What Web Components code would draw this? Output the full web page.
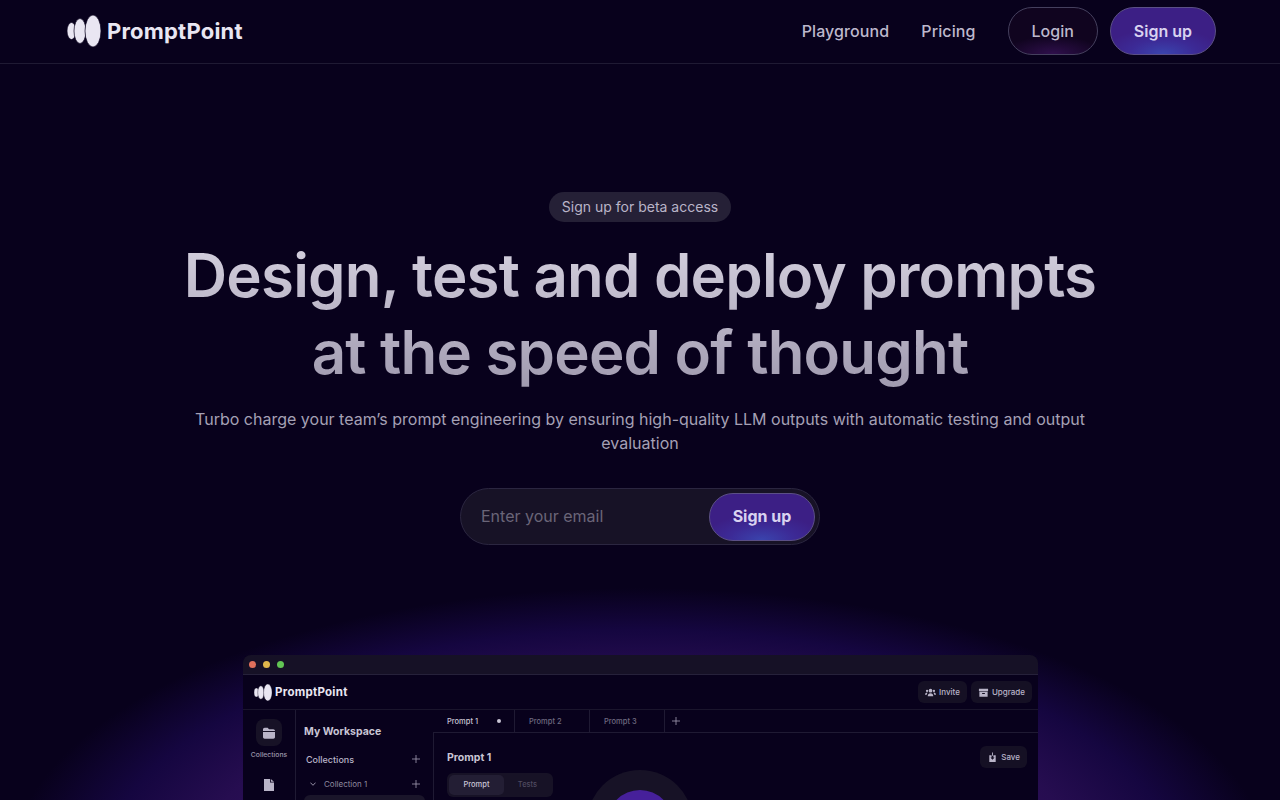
<!DOCTYPE html>
<html lang="en">
<head>
<meta charset="utf-8">
<title>PromptPoint</title>
<style>
    html, body { margin: 0; height: 100%; }
    body { background: #08011c; font-family: Inter, "Liberation Sans", sans-serif; overflow: hidden; }
</style>
</head>
<body>
<pp-page>
    <pp-nav slot="nav"></pp-nav>
    <pp-hero slot="hero"></pp-hero>
    <pp-window slot="window"></pp-window>
</pp-page>

<script>
const LOGO = (h, c) => `
    <svg width="${h * 34 / 32}" height="${h}" viewBox="0 0 34 32" fill="${c}" stroke="#08011c" stroke-width=".7">
        <ellipse cx="4.500" cy="16" rx="4.500" ry="8.500"/>
        <ellipse cx="13" cy="16" rx="6" ry="12.500"/>
        <ellipse cx="26" cy="16" rx="8" ry="16"/>
    </svg>`;

const PLUS = `<svg width="8" height="8" viewBox="0 0 8 8" stroke="#a5a0b5" stroke-width=".8"><path d="M4 0v8M0 4h8"/></svg>`;
const CHEVRON = `<svg width="6" height="4" viewBox="0 0 6 4" fill="none" stroke="#a5a0b5" stroke-width=".9"><path d="M.4.6 3 3.300 5.600.6"/></svg>`;

const ICONS = {
    folder: `<svg viewBox="0 0 24 24" fill="currentColor"><path d="M3 6.500C3 5.100 4.100 4 5.500 4H10l2 2.500h6.500C19.900 6.500 21 7.600 21 9H3z"/><path d="M3 10.500h18V18c0 1.400-1.100 2.500-2.500 2.500h-13C4.100 20.500 3 19.400 3 18z"/></svg>`,
    file: `<svg viewBox="0 0 10 12" fill="currentColor"><path d="M0 0h6v3.500h4V12H0z"/><path d="M6.800 0 10 2.800H6.800z"/></svg>`,
    users: `<svg viewBox="0 0 24 24" fill="currentColor"><circle cx="12" cy="8" r="4"/><circle cx="4.500" cy="8.500" r="2.500"/><circle cx="19.500" cy="8.500" r="2.500"/><path d="M6 20c0-4 2.500-6.500 6-6.500s6 2.500 6 6.500z"/><path d="M0 17c0-3 2-5 4.500-5l1 .5C4.500 14 4 15.500 4 17zM24 17c0-3-2-5-4.500-5l-1 .5c1 1.500 1.500 3 1.500 4.500z"/></svg>`,
    box: `<svg viewBox="0 0 24 24" fill="currentColor"><path d="M2 4h20v5H2z"/><path d="M3 10.500h18V21H3zM9 13v2h6v-2z" fill-rule="evenodd"/></svg>`,
    save: `<svg viewBox="0 0 24 24" fill="currentColor"><path d="M11 1h2v7h-2z"/><path d="M5 7h5v5H7.500l4.500 5 4.500-5H14V7h5v15H5z"/></svg>`
};

class PpPage extends HTMLElement {
    constructor() {
        super();
        this.attachShadow({mode: 'open'});
        this.shadowRoot.innerHTML = `
            <style>
                :host {
                    display: flex;
                    flex-direction: column;
                    position: relative;
                    width: 1280px;
                    height: 800px;
                    overflow: hidden;
                    background: #08011c;
                }
                #glow {
                    position: absolute;
                    left: 640px;
                    top: 588px;
                    width: 1260px;
                    height: 560px;
                    margin-left: -630px;
                    border-radius: 50%;
                    background: radial-gradient(closest-side, #3a1068 0%, #33105f 50%, #260d50 70%, #150640 85%, rgba(8,1,28,0) 100%);
                }
                .layer { position: relative; display: flex; flex-direction: column; }
            </style>
            <div id="glow"></div>
            <div class="layer">
                <slot name="nav"></slot>
                <slot name="hero"></slot>
                <slot name="window"></slot>
            </div>
        `;
    }
}

class PpButton extends HTMLElement {
    constructor() {
        super();
        this.attachShadow({mode: 'open'});
        this.shadowRoot.innerHTML = `
            <style>
                :host {
                    display: inline-flex;
                    align-items: center;
                    justify-content: center;
                    box-sizing: border-box;
                    height: 48px;
                    padding: 0 23px;
                    border-radius: 24px;
                    border: 1px solid #5b4f86;
                    color: #d9d2f0;
                    font: 600 16px/24px Inter, "Liberation Sans", sans-serif;
                    background: radial-gradient(60px 26px at 50% 100%, #3a44ad 0%, #3c2a96 55%, #3c1f85 100%);
                }
                :host([ghost]) {
                    font-weight: 500;
                    color: #bdb8cc;
                    border-color: #45405e;
                    background: radial-gradient(50px 18px at 50% 100%, #2f0f4c 0%, #10041f 100%);
                }
            </style>
            <slot></slot>
        `;
    }
}

class PpNav extends HTMLElement {
    constructor() {
        super();
        this.attachShadow({mode: 'open'});
        this.shadowRoot.innerHTML = `
            <style>
                :host {
                    display: flex;
                    align-items: center;
                    justify-content: space-between;
                    box-sizing: border-box;
                    height: 64px;
                    padding: 0 64px 2px 67px;
                    border-bottom: 1px solid #1f1a33;
                }
                #brand { display: flex; align-items: center; gap: 6px; color: #e9e6f2; font: 700 22px/28px Inter, sans-serif; letter-spacing: .2px; }
                #links { display: flex; align-items: center; }
                a { color: #bdb8cc; font: 500 16px/24px Inter, sans-serif; letter-spacing: .1px; margin-right: 32px; }
                pp-button + pp-button { margin-left: 12px; }
            </style>
            <div id="brand">${LOGO(32, '#e9e6f2')}<span>PromptPoint</span></div>
            <div id="links">
                <a>Playground</a>
                <a>Pricing</a>
                <pp-button ghost>Login</pp-button>
                <pp-button>Sign up</pp-button>
            </div>
        `;
    }
}

class PpHero extends HTMLElement {
    constructor() {
        super();
        this.attachShadow({mode: 'open'});
        this.shadowRoot.innerHTML = `
            <style>
                :host {
                    display: flex;
                    flex-direction: column;
                    align-items: center;
                    padding-top: 128px;
                    text-align: center;
                }
                #pill {
                    height: 30px;
                    padding: 0 13px;
                    border-radius: 15px;
                    background: #252036;
                    color: #b9b4c8;
                    font: 400 14px/30px Inter, sans-serif;
                }
                h1 {
                    margin: 15px 0 0;
                    font: 600 60px/77px Inter, sans-serif;
                    letter-spacing: -.8px;
                    background: linear-gradient(180deg, #d6d2e0 0%, #9f99ae 100%);
                    -webkit-background-clip: text;
                    background-clip: text;
                    color: transparent;
                }
                p {
                    width: 900px;
                    margin: 16px 0 0;
                    color: #a5a0b5;
                    font: 400 16px/24px Inter, sans-serif;
                }
                #form {
                    display: flex;
                    align-items: center;
                    justify-content: space-between;
                    box-sizing: border-box;
                    width: 360px;
                    height: 57px;
                    margin-top: 33px;
                    margin-bottom: 1px;
                    padding: 0 4px 0 20px;
                    border-radius: 29px;
                    border: 1px solid #2b2640;
                    background: #171226;
                    color: #6a6578;
                    font: 400 16px/24px Inter, sans-serif;
                }
                #form span { padding-bottom: 2px; }
                pp-button { width: 106px; padding: 0 0 2px; font-weight: 700; }
            </style>
            <div id="pill">Sign up for beta access</div>
            <h1>Design, test and deploy prompts<br>at the speed of thought</h1>
            <p>Turbo charge your team’s prompt engineering by ensuring high-quality LLM outputs with automatic testing and output evaluation</p>
            <div id="form"><span>Enter your email</span><pp-button>Sign up</pp-button></div>
        `;
    }
}

class PpChip extends HTMLElement {
    constructor() {
        super();
        this.attachShadow({mode: 'open'});
        const icon = ICONS[this.getAttribute('icon')];
        this.shadowRoot.innerHTML = `
            <style>
                :host {
                    display: inline-flex;
                    align-items: center;
                    gap: 3px;
                    box-sizing: border-box;
                    height: 22px;
                    padding: 0 7px;
                    border-radius: 6px;
                    background: #151024;
                    color: #b9b4c8;
                    font: 500 8px/12px Inter, sans-serif;
                }
                svg { width: 11px; height: 11px; }
            </style>
            ${icon}<slot></slot>
        `;
    }
}

class PpWindow extends HTMLElement {
    constructor() {
        super();
        this.attachShadow({mode: 'open'});
        this.shadowRoot.innerHTML = `
            <style>
                :host {
                    display: block;
                    box-sizing: border-box;
                    width: 795px;
                    margin: 109px 0 0 243px;
                    height: 300px;
                    border-radius: 8px 8px 0 0;
                    background: #08011c;
                    color: #b9b4c8;
                    font-family: Inter, sans-serif;
                    overflow: hidden;
                }
                #bar {
                    display: flex;
                    align-items: center;
                    gap: 7px;
                    height: 20px;
                    padding-left: 6px;
                    background: #161126;
                    border-bottom: 1px solid #26213a;
                    box-sizing: border-box;
                }
                #bar i { width: 7px; height: 7px; border-radius: 50%; }
                #head {
                    display: flex;
                    align-items: center;
                    justify-content: space-between;
                    box-sizing: border-box;
                    height: 35px;
                    padding: 0 6px 0 11px;
                    border-bottom: 1px solid #1a152c;
                }
                #brand { display: flex; align-items: center; gap: 3px; color: #e9e6f2; font: 700 11.500px/16px Inter, sans-serif; letter-spacing: .25px; }
                #chips { display: flex; gap: 4px; }
                #body { display: grid; grid-template-columns: 53px 137px 1fr; height: 245px; }
                #rail {
                    display: flex;
                    flex-direction: column;
                    align-items: center;
                    padding-top: 9px;
                    border-right: 1px solid #1f1a33;
                    font-size: 6.800px;
                    color: #9c97ab;
                }
                #rail b {
                    display: flex;
                    align-items: center;
                    justify-content: center;
                    width: 26px;
                    height: 27px;
                    border-radius: 8px;
                    background: #171226;
                    color: #b9b4c8;
                    margin-bottom: 4px;
                }
                #rail b svg { width: 16px; height: 16px; }
                #rail span { line-height: 9px; font-weight: 500; margin-bottom: 20px; }
                #rail > svg { color: #b9b4c8; width: 10px; height: 12px; }
                #side { padding: 15px 8px 0 8px; }
                #side h4 { margin: 0; color: #c9c5d5; font: 700 10.500px/14px Inter, sans-serif; }
                .row {
                    display: flex;
                    align-items: center;
                    justify-content: space-between;
                    height: 12px;
                    padding: 0 5px 0 2px;
                    font-size: 9px;
                    font-weight: 500;
                    color: #b9b4c8;
                }
                .row.main { margin-top: 14px; }
                .row.sub { margin-top: 13px; color: #8f8a9f; font-size: 8px; font-weight: 400; }
                .sub span { display: flex; align-items: center; gap: 8px; padding-left: 4px; }
                #sel { height: 20px; margin-top: 5px; background: #1a152a; border-radius: 6px; }
                #tabs { display: flex; align-items: stretch; height: 23px; box-sizing: border-box; border-bottom: 1px solid #1f1a33; font-size: 7.500px; font-weight: 500; color: #6f6a80; }
                #tabs div { display: flex; align-items: center; justify-content: space-between; box-sizing: border-box; width: 75px; padding: 0 13px 0 14px; border-right: 1px solid #1f1a33; }
                #tabs div:first-child { width: 82px; color: #c9c5d5; }
                #tabs i { width: 4px; height: 4px; border-radius: 50%; background: #c9c5d5; }
                #tabs span { display: flex; align-items: center; padding: 0 7px; }
                #main { position: relative; height: 222px; box-sizing: border-box; padding: 13px 11px 0 13px; border-left: 1px solid #1f1a33; }
                #title { display: flex; align-items: center; justify-content: space-between; color: #c9c5d5; font: 700 10.500px/14px Inter, sans-serif; }
                #title span { padding-top: 1px; }
                #seg { display: inline-flex; margin-top: 5px; padding: 2px; border-radius: 6px; background: #171226; font-size: 7.500px; font-weight: 500; color: #4f4a60; }
                #seg span { width: 47px; text-align: center; line-height: 20px; }
                #seg span:first-child { width: 55px; background: #231e34; color: #c9c5d5; border-radius: 5px; }
                #orb {
                    position: absolute;
                    left: 153px;
                    top: 37px;
                    width: 106px;
                    height: 106px;
                    border-radius: 50%;
                    background: #171226;
                    display: flex;
                    align-items: center;
                    justify-content: center;
                }
                #orb::after { content: ""; width: 66px; height: 66px; border-radius: 50%; background: #46209a; }
            </style>
            <div id="bar">
                <i style="background:#e0705c"></i><i style="background:#e0b64c"></i><i style="background:#62c554"></i>
            </div>
            <div id="head">
                <div id="brand">${LOGO(17, '#e9e6f2')}<span>PromptPoint</span></div>
                <div id="chips"><pp-chip icon="users">Invite</pp-chip><pp-chip icon="box">Upgrade</pp-chip></div>
            </div>
            <div id="body">
                <div id="rail">
                    <b>${ICONS.folder}</b>
                    <span>Collections</span>
                    ${ICONS.file}
                </div>
                <div id="side">
                    <h4>My Workspace</h4>
                    <div class="row main">Collections${PLUS}</div>
                    <div class="row sub"><span>${CHEVRON}Collection 1</span>${PLUS}</div>
                    <div id="sel"></div>
                </div>
                <div>
                    <div id="tabs">
                        <div>Prompt 1<i></i></div>
                        <div>Prompt 2</div>
                        <div>Prompt 3</div>
                        <span>${PLUS}</span>
                    </div>
                    <div id="main">
                        <div id="title"><span>Prompt 1</span><pp-chip icon="save">Save</pp-chip></div>
                        <div id="seg"><span>Prompt</span><span>Tests</span></div>
                        <div id="orb"></div>
                    </div>
                </div>
            </div>
        `;
    }
}

customElements.define('pp-button', PpButton);
customElements.define('pp-chip', PpChip);
customElements.define('pp-page', PpPage);
customElements.define('pp-nav', PpNav);
customElements.define('pp-hero', PpHero);
customElements.define('pp-window', PpWindow);
</script>
</body>
</html>
